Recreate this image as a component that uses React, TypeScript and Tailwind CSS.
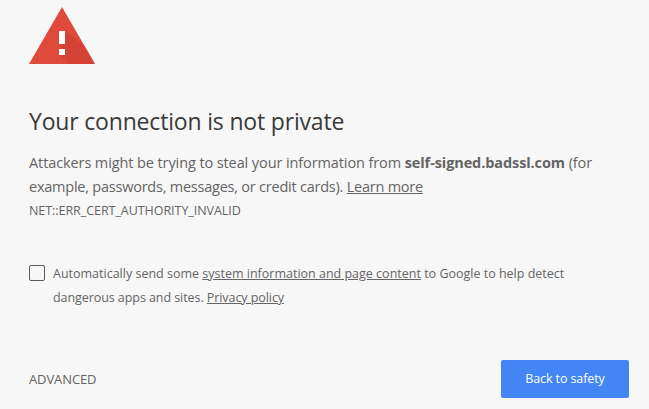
export default function App() {
  const font = { fontFamily: '"Open Sans", "Noto Sans", sans-serif' };
  return (
    <div style={font} className="w-[649px] h-[409px] overflow-hidden bg-[#f7f7f7] text-[#646464] pl-[29px] pr-[20px] flex flex-col">
      <svg className="mt-[7px] shrink-0" width="66" height="57" viewBox="0 0 66 57">
        <path d="M33 0 L66 57 H0 Z" fill="#e04a3b" />
        <path d="M36 24 L55.5 39 L66 57 H40 L30 48 Z" fill="#c5392d" opacity="0.5" />
        <rect x="30" y="24" width="6" height="13" fill="#fff" />
        <rect x="30" y="42" width="6" height="6" fill="#fff" />
      </svg>
      <h1 className="mt-[39px] text-[23px] leading-[36px] font-normal text-[#3a3a3a] tracking-[-0.18px]">Your connection is not private</h1>
      <p className="mt-[12px] text-[14.5px] leading-[24px] tracking-[-0.1px] whitespace-nowrap">
        Attackers might be trying to steal your information from <b className="font-bold">self-signed.badssl.com</b> (for
        <br />
        <span className="tracking-[-0.23px]">example, passwords, messages, or credit cards). <a className="underline">Learn more</a></span>
      </p>
      <div className="text-[12.5px] leading-[16px] tracking-[-0.05px] mt-[4px]">NET::ERR_CERT_AUTHORITY_INVALID</div>
      <div className="mt-[43px] flex items-start">
        <div className="mt-[3px] w-[16px] h-[16px] rounded-[2px] border border-[#5a5a5a] shrink-0" />
        <p className="ml-[8px] text-[12.5px] leading-[24px] whitespace-nowrap">
          Automatically send some <a className="underline">system information and page content</a> to Google to help detect
          <br />
          <span className="tracking-[-0.07px]">dangerous apps and sites. <a className="underline">Privacy policy</a></span>
        </p>
      </div>
      <div className="mt-auto mb-[11px] flex items-center justify-between">
        <span className="text-[13px] tracking-[-0.1px] translate-y-[1px]">ADVANCED</span>
        <button className="w-[128px] h-[38px] rounded-[2px] bg-[#4285f4] text-white text-[12.5px] tracking-[-0.1px]">Back to safety</button>
      </div>
    </div>
  );
}
